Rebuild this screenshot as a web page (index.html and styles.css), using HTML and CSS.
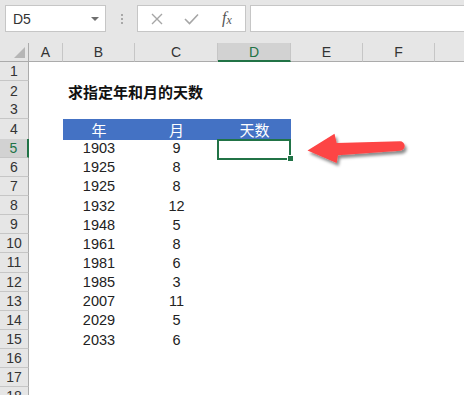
FILE: index.html
```html
<!DOCTYPE html>
<html lang="zh-CN">
<head>
    <meta charset="UTF-8">
    <title>求指定年和月的天数</title>
    <link rel="stylesheet" href="styles.css">
</head>
<body>
    <!-- Formula bar -->
    <div class="toolbar">
        <div class="namebox">
            <span>D5</span>
            <span class="drop"></span>
        </div>
        <div class="dots"><i></i><i></i><i></i></div>
        <div class="fbuttons">
            <svg width="12" height="12" viewBox="0 0 12 12"><path d="M1 1L11 11M11 1L1 11" stroke="#a6a6a6" stroke-width="1.4"/></svg>
            <svg width="15" height="12" viewBox="0 0 15 12"><path d="M1 6L5.5 10.5L14 1.5" stroke="#a6a6a6" stroke-width="1.6" fill="none"/></svg>
            <span class="fx">f<sub>x</sub></span>
        </div>
        <div class="formula"></div>
    </div>

    <!-- Sheet -->
    <div class="sheet">
        <div class="row head">
            <div class="corner"><span></span></div>
            <div class="ch">A</div>
            <div class="ch">B</div>
            <div class="ch">C</div>
            <div class="ch active">D</div>
            <div class="ch">E</div>
            <div class="ch">F</div>
            <div class="ch last"></div>
        </div>
        <div class="row"><div class="rh">1</div></div>
        <div class="row"><div class="rh">2</div><div class="cell b title">求指定年和月的天数</div></div>
        <div class="row"><div class="rh">3</div></div>
        <div class="row"><div class="rh">4</div><div class="cell b hd">年</div><div class="cell c hd">月</div><div class="cell d hd">天数</div></div>
        <div class="row"><div class="rh active">5</div><div class="cell b">1903</div><div class="cell c">9</div><div class="cell d sel"></div></div>
        <div class="row"><div class="rh">6</div><div class="cell b">1925</div><div class="cell c">8</div></div>
        <div class="row"><div class="rh">7</div><div class="cell b">1925</div><div class="cell c">8</div></div>
        <div class="row"><div class="rh">8</div><div class="cell b">1932</div><div class="cell c">12</div></div>
        <div class="row"><div class="rh">9</div><div class="cell b">1948</div><div class="cell c">5</div></div>
        <div class="row"><div class="rh">10</div><div class="cell b">1961</div><div class="cell c">8</div></div>
        <div class="row"><div class="rh">11</div><div class="cell b">1981</div><div class="cell c">6</div></div>
        <div class="row"><div class="rh">12</div><div class="cell b">1985</div><div class="cell c">3</div></div>
        <div class="row"><div class="rh">13</div><div class="cell b">2007</div><div class="cell c">11</div></div>
        <div class="row"><div class="rh">14</div><div class="cell b">2029</div><div class="cell c">5</div></div>
        <div class="row"><div class="rh">15</div><div class="cell b">2033</div><div class="cell c">6</div></div>
        <div class="row"><div class="rh">16</div></div>
        <div class="row"><div class="rh">17</div></div>
        <div class="row"><div class="rh">18</div></div>
    </div>

    <!-- Red pointer arrow -->
    <svg class="arrow" width="112" height="46" viewBox="0 0 112 46">
        <defs>
            <filter id="shadow" x="-10%" y="-20%" width="130%" height="160%">
                <feDropShadow dx="2" dy="3" stdDeviation="1.6" flood-color="#000" flood-opacity="0.45"/>
            </filter>
        </defs>
        <path d="M7.5 24.5 L34.5 7.7 L36.7 17 L100 15.3 A4.7 4.7 0 0 1 100 24.7 L38 29.3 L36.7 37 Z" fill="#fd4545" filter="url(#shadow)"/>
    </svg>
</body>
</html>
```

FILE: styles.css
```css
body {
    margin: 0;
    width: 464px;
    height: 395px;
    overflow: hidden;
    position: relative;
    background-color: #e6e6e6;
    font-family: 'Liberation Sans', 'Noto Sans CJK SC', sans-serif;
    color: #222;
}

/* formula bar */
.toolbar {
    height: 43px;
    display: flex;
    align-items: flex-start;
    padding-top: 5px;
    box-sizing: border-box;
}
.namebox {
    margin-left: 5px;
    width: 101px;
    height: 27px;
    box-sizing: border-box;
    background: #fff;
    border: 1px solid #c6c6c6;
    display: flex;
    align-items: center;
    justify-content: space-between;
    padding: 0 6px 0 7px;
    font-size: 14px;
    color: #333;
}
.drop {
    width: 0;
    height: 0;
    border-left: 4px solid transparent;
    border-right: 4px solid transparent;
    border-top: 4px solid #6f6f6f;
}
.dots {
    width: 31px;
    height: 27px;
    display: flex;
    flex-direction: column;
    align-items: center;
    justify-content: center;
    gap: 2px;
}
.dots i {
    width: 2px;
    height: 2px;
    background: #a8a8a8;
}
.fbuttons {
    width: 109px;
    height: 27px;
    box-sizing: border-box;
    background: #fff;
    border: 1px solid #c6c6c6;
    display: flex;
    align-items: center;
    padding-left: 13px;
    gap: 21px;
}
.fx {
    font-family: 'Liberation Serif', serif;
    font-style: italic;
    font-size: 16px;
    color: #555;
    margin-left: 2px;
}
.fx sub {
    font-size: 12px;
    vertical-align: -1px;
}
.formula {
    margin-left: 4px;
    flex: 1;
    height: 27px;
    box-sizing: border-box;
    background: #fff;
    border: 1px solid #c6c6c6;
    border-right: none;
}

/* sheet grid */
.sheet {
    background: #fff;
}
.row {
    display: grid;
    grid-template-columns: 29px 34px 72px 83px 73px 72px 72px 1fr;
    height: 19.15px;
}
.row.head {
    height: 19px;
    background: #e6e6e6;
}
.corner {
    grid-column: 1;
    border-right: 1px solid #ababab;
    border-bottom: 1px solid #ababab;
    position: relative;
}
.corner span {
    position: absolute;
    right: 3px;
    bottom: 3px;
    width: 0;
    height: 0;
    border-left: 11px solid transparent;
    border-bottom: 11px solid #b6b6b6;
}
.ch {
    border-right: 1px solid #c6c6c6;
    border-bottom: 1px solid #ababab;
    font-size: 14px;
    color: #333;
    display: flex;
    align-items: center;
    justify-content: center;
}
.ch.last {
    border-right: none;
}
.ch.active {
    background: #d2d2d2;
    border-bottom: 2px solid #217346;
    color: #217346;
}
.rh {
    grid-column: 1;
    background: #e6e6e6;
    border-right: 1px solid #ababab;
    border-bottom: 1px solid #c6c6c6;
    font-size: 14px;
    color: #333;
    display: flex;
    align-items: center;
    justify-content: center;
}
.rh.active {
    background: #d2d2d2;
    border-right: 2px solid #217346;
    color: #217346;
}
.cell {
    font-size: 14.5px;
    display: flex;
    align-items: center;
    justify-content: center;
    white-space: nowrap;
}
.cell.b { grid-column: 3; }
.cell.c { grid-column: 4; }
.cell.d { grid-column: 5; }
.cell.title {
    justify-content: flex-start;
    padding-left: 5px;
    font-size: 15px;
    font-weight: bold;
    color: #111;
}
.cell.hd {
    background: #4472c4;
    color: #fff;
    font-size: 15px;
}
.cell.sel {
    position: relative;
}
.cell.sel::after {
    content: "";
    position: absolute;
    top: 0;
    left: -1px;
    right: 0;
    bottom: -2px;
    border: 2px solid #217346;
}
.cell.sel::before {
    content: "";
    position: absolute;
    right: -3px;
    bottom: -4px;
    width: 5px;
    height: 5px;
    background: #217346;
    border: 1px solid #fff;
    z-index: 1;
}

.arrow {
    position: absolute;
    left: 300px;
    top: 126px;
}
```
